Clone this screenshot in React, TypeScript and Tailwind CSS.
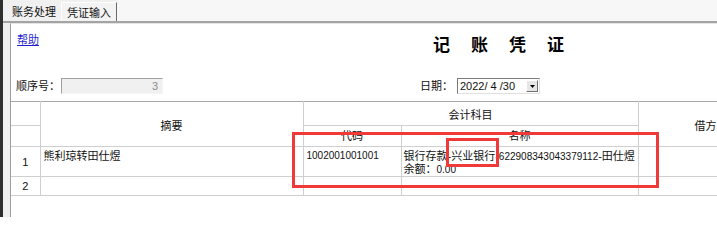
const titleChars = ['记', '账', '凭', '证'];

const RowNumberCell = ({ n, h }: { n?: string; h: string }) => (
  <td className={`${h} border-r border-b border-[#cfcfcf] text-center align-middle p-0`}>{n}</td>
);

export default function App() {
  return (
    <div className="relative w-[717px] h-[217px] overflow-hidden bg-white flex font-['Liberation_Sans','Noto_Sans_CJK_SC',sans-serif] text-[11px] text-[#111]">
      <div className="w-[3px] shrink-0 bg-[#2e2e2e]" />

      <div className="flex-1 min-w-0 flex flex-col">
        {/* tab strip */}
        <div className="h-[21px] shrink-0 flex bg-[#f0f0f0] leading-[14px]">
          <div className="w-[58px] pl-[9px] pt-[5px]">账务处理</div>
          <div className="w-[56px] pl-[5px] pt-[5px] mt-[2px] border-l border-t border-white border-r border-r-[#6b6b6b] bg-[#f3f3f3]">
            <span className="relative -top-[2px]">凭证输入</span>
          </div>
          <div className="flex-1 bg-[#f7f7f7]" />
        </div>
        <div className="h-[2px] shrink-0 bg-[#a4a4a4]" />

        <div className="flex-1 flex min-h-0">
          <div className="w-[7px] shrink-0 bg-[#f0f0f0]" />
          <div className="flex-1 min-w-0 flex flex-col border-l border-t border-l-[#a0a0a0] border-t-[#e4e4e4] overflow-hidden">
            {/* head of the voucher */}
            <div className="h-[77px] shrink-0 flex flex-col">
              <div className="h-[44px] flex items-start">
                <div className="w-[422px] pl-[6px] pt-[9px] leading-[14px]">
                  <span className="text-[#1f1fd0] underline">帮助</span>
                </div>
                <div className="flex pt-[10px] font-['Noto_Sans_CJK_SC',serif] font-bold text-[17px] leading-[20px] text-black">
                  {titleChars.map((c) => (
                    <span key={c} className="w-[38px]">{c}</span>
                  ))}
                </div>
              </div>
              <div className="flex items-center pt-[10px] leading-[14px]">
                <span className="w-[50px] pl-[5px] whitespace-nowrap">顺序号：</span>
                <div className="w-[102px] h-[16px] flex items-center justify-end pr-[4px] bg-[#f0f0f0] border border-t-[#a0a0a0] border-l-[#a0a0a0] border-b-[#f5f5f5] border-r-[#f5f5f5] text-[#8a8a8a]">
                  3
                </div>
                <span className="ml-[257px] w-[37px] whitespace-nowrap">日期：</span>
                <div className="w-[83px] h-[16px] flex items-center justify-between pl-[2px] pr-[1px] bg-white border border-t-[#7a7a7a] border-l-[#7a7a7a] border-b-[#e0e0e0] border-r-[#e0e0e0]">
                  <span>2022/ 4 /30</span>
                  <div className="w-[12px] h-[12px] flex items-center justify-center bg-[#e6e6e6] border border-t-white border-l-white border-b-[#707070] border-r-[#707070]">
                    <svg width="5" height="3" viewBox="0 0 5 3">
                      <path d="M0 0h5L2.5 3z" fill="#000" />
                    </svg>
                  </div>
                </div>
              </div>
            </div>

            {/* entries */}
            <table className="table-fixed border-collapse w-[785px] shrink-0 border-t border-[#a8a8a8]">
              <colgroup>
                <col className="w-[29px]" />
                <col className="w-[263px]" />
                <col className="w-[98px]" />
                <col className="w-[237px]" />
                <col className="w-[158px]" />
              </colgroup>
              <tbody className="leading-[12px]">
                <tr>
                  <RowNumberCell h="h-[24px]" />
                  <td rowSpan={2} className="border-r border-b border-[#cfcfcf] text-center align-middle pt-[3px]">摘要</td>
                  <td colSpan={2} className="h-[24px] border-r border-b border-[#cfcfcf] text-center align-middle pt-[2px]">会计科目</td>
                  <td rowSpan={2} className="border-r border-b border-[#cfcfcf] text-left align-middle pl-[56px] pt-[3px] whitespace-nowrap">借方</td>
                </tr>
                <tr>
                  <RowNumberCell h="h-[21px]" />
                  <td className="h-[21px] border-r border-b border-[#cfcfcf] text-center align-middle">代码</td>
                  <td className="border-r border-b border-[#cfcfcf] text-center align-middle">名称</td>
                </tr>
                <tr>
                  <RowNumberCell n="1" h="h-[29px]" />
                  <td className="border-r border-b border-[#cfcfcf] align-top pl-[3px] pt-[3px]">熊利琼转田仕煜</td>
                  <td className="border-r border-b border-[#cfcfcf] align-top pl-[3px] pt-[3px] text-[10px]">1002001001001</td>
                  <td className="border-r border-b border-[#cfcfcf] align-top pl-[2px] pt-[3px] whitespace-nowrap overflow-hidden">
                    <div>
                      银行存款-兴业银行-<span className="text-[10px]">622908343043379112</span>-田仕煜
                    </div>
                    <div>
                      余额：<span className="text-[10px]">0.00</span>
                    </div>
                  </td>
                  <td className="border-r border-b border-[#cfcfcf]" />
                </tr>
                <tr>
                  <RowNumberCell n="2" h="h-[19px]" />
                  <td className="border-r border-b border-[#cfcfcf]" />
                  <td className="border-r border-b border-[#cfcfcf]" />
                  <td className="border-r border-b border-[#cfcfcf]" />
                  <td className="border-r border-b border-[#cfcfcf]" />
                </tr>
              </tbody>
            </table>
          </div>
        </div>
      </div>

      {/* red annotation boxes */}
      <div className="absolute left-[292px] top-[132px] w-[367px] h-[56px] border-[3px] border-[#f03a3a]" />
      <div className="absolute left-[446px] top-[138px] w-[53px] h-[29px] border-[3px] border-[#f03a3a]" />
    </div>
  );
}
